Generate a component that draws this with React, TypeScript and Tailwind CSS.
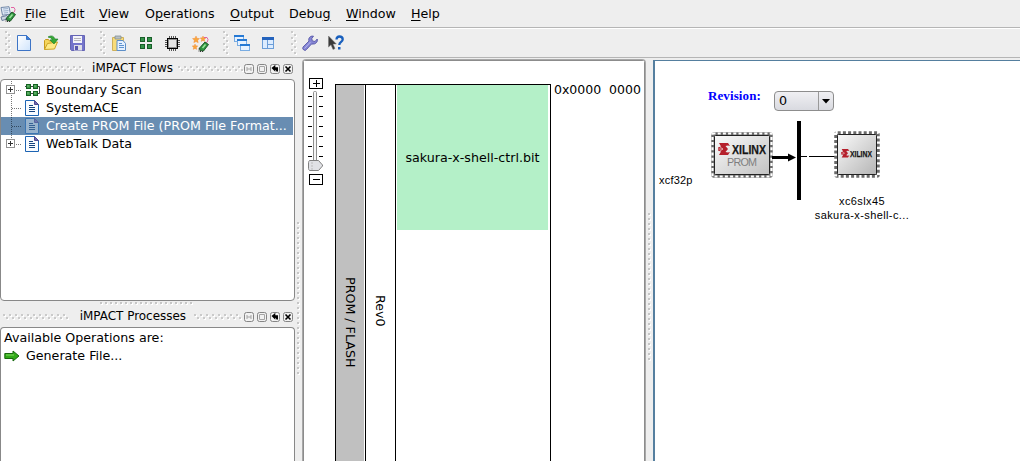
import React from "react";

function Grip({ dir, w, h }: { dir: "h" | "v"; w: number; h: number }) {
  const n = Math.floor((dir === "h" ? w : h) / 3);
  return (
    <svg width={w} height={h} className="shrink-0" shapeRendering="crispEdges">
      {Array.from({ length: n }, (_, i) => {
        const x = dir === "h" ? i * 3 : (i % 2) * 3;
        const y = dir === "h" ? (i % 2) * 3 : i * 3;
        return (
          <g key={i}>
            <rect x={x + 1} y={y + 1} width="2" height="2" fill="#fff" />
            <rect x={x} y={y} width="2" height="2" fill="#cacaca" />
          </g>
        );
      })}
    </svg>
  );
}

function LineGrip({ dir, n }: { dir: "h" | "v"; n: number }) {
  return (
    <svg width={dir === "h" ? n * 5 : 3} height={dir === "h" ? 3 : n * 5} className="shrink-0" shapeRendering="crispEdges">
      {Array.from({ length: n }, (_, i) => {
        const x = dir === "h" ? i * 5 : 0;
        const y = dir === "h" ? 0 : i * 5;
        return (
          <g key={i}>
            <rect x={x + 1} y={y + 1} width="2" height="2" fill="#fff" />
            <rect x={x} y={y} width="2" height="2" fill="#c6c6c6" />
          </g>
        );
      })}
    </svg>
  );
}

function DeviceTag() {
  return (
    <g>
      <path d="M11 1.500q4-1 4 2t-2.500 3.500" fill="none" stroke="#e0559a" strokeWidth=".9" />
      <path d="M6.500 12 12 6l3.500 2.500-5 6.500-3.500-.5z" fill="#2f9440" stroke="#174e20" strokeWidth=".9" />
      <path d="m9.500 12 3-3.500" stroke="#9ce59c" strokeWidth="1.500" />
      <path d="M6 12.500v3M7 15.500h3" stroke="#333" strokeDasharray="1 1" />
    </g>
  );
}

function AppIcon() {
  return (
    <svg width="16" height="16" viewBox="0 0 16 16">
      <path d="M1 1.500 9 .7l1.500 7.500-8 1z" fill="#dfe8f5" stroke="#7288a8" />
      <path d="m3 3 5-.5M3.400 5l5-.5M4 7l4-.5" stroke="#9db3cf" />
      <path d="m1 11 6-1.500 2 3-7 2z" fill="#cbd5e3" stroke="#6d809c" />
      <DeviceTag />
    </svg>
  );
}

function NewIcon() {
  return (
    <svg width="16" height="18" viewBox="0 0 16 18">
      <defs>
        <linearGradient id="paper" x1="0" y1="0" x2="1" y2="1">
          <stop offset="0" stopColor="#fff" />
          <stop offset="1" stopColor="#cfe4fc" />
        </linearGradient>
      </defs>
      <path d="M1.500 1.500h9l4 4v11h-13z" fill="url(#paper)" stroke="#3d74c6" />
      <path d="M10.500 1.500v4h4z" fill="#3b80dc" stroke="#3d74c6" />
    </svg>
  );
}

function OpenIcon() {
  return (
    <svg width="16" height="18" viewBox="0 0 16 18">
      <path d="M1.500 15.500V6.500l1-1h3l1 1.500h5v3" fill="#f5d65d" stroke="#c89a1c" />
      <path d="m1.500 15.500 3-6 10-1.500-3 7z" fill="#fdea86" stroke="#cda425" />
      <path d="M5 3q5-3 7 2h3l-4 5-4-4 2.500-.5Q8.500 3.500 5 3z" fill="#36a835" stroke="#167b24" strokeWidth=".6" />
    </svg>
  );
}

function SaveIcon() {
  return (
    <svg width="16" height="18" viewBox="0 0 16 18">
      <path d="M.5 1.500h14v15h-13l-1-1z" fill="#7474cb" stroke="#6565b4" />
      <path d="M3 2h9v7H3z" fill="#f4f4fa" />
      <path d="M4 4.500h7M4 6.500h7" stroke="#b5b5ba" />
      <path d="M4 11h8v5.500H4z" fill="#dedee6" />
      <path d="M5 12h3v4H5z" fill="#5959af" />
    </svg>
  );
}

function PasteIcon() {
  return (
    <svg width="16" height="17" viewBox="0 0 16 17">
      <path d="M1.500 2.500h11v13h-11z" fill="#f8dc79" stroke="#ceb05a" />
      <path d="M4 1h6v3H4z" fill="#b9c0c4" stroke="#829196" strokeWidth=".8" />
      <path d="M6 5.500h6l2.500 3v7H6z" fill="#e4f0ff" stroke="#5d8fc8" />
      <path d="M8 8.500h3M8 10.500h5M8 12.500h5" stroke="#5f93cf" />
    </svg>
  );
}

function BoundaryIcon() {
  return (
    <svg width="14" height="16" viewBox="0 0 14 16" shapeRendering="crispEdges">
      {[[1, 2], [8, 2], [1, 9], [8, 9]].map(([x, y]) => (
        <g key={`${x}-${y}`}>
          <rect x={x} y={y} width="5" height="5" fill="#185f29" />
          <rect x={x + 1} y={y + 1} width="3" height="3" fill="#35944b" />
        </g>
      ))}
    </svg>
  );
}

function ChipIcon() {
  return (
    <svg width="15" height="15" viewBox="0 0 15 15" shapeRendering="crispEdges">
      <path d="M4.500 0v15M6.500 0v15M8.500 0v15M10.500 0v15M0 4.500h15M0 6.500h15M0 8.500h15M0 10.500h15" stroke="#555" />
      <rect x="2" y="2" width="11" height="11" fill="#000" />
      <rect x="3" y="3" width="9" height="9" fill="#8f8f8f" />
      <rect x="4" y="4" width="7" height="7" fill="#e4e4e4" />
    </svg>
  );
}

function WizardIcon() {
  return (
    <svg width="17" height="17" viewBox="0 0 17 17">
      <g fill="#f9a63d" stroke="#ef8732" strokeWidth=".4">
        <path d="m4 1 1 2.300 2.500.3-1.800 1.700.5 2.400L4 6.500 1.800 7.700l.5-2.400L.5 3.600 3 3.300z" />
        <path d="m11 1 .8 1.800 2 .2-1.500 1.400.4 2L11 5.400 9.200 6.400l.5-2L8.200 3l2-.2z" />
        <path d="m3 9 .8 1.800 2 .2-1.500 1.400.4 2L3 13.400 1.200 14.400l.5-2L.2 11l2-.2z" />
      </g>
      <g transform="translate(1 1)"><DeviceTag /></g>
    </svg>
  );
}

function CascadeIcon() {
  return (
    <svg width="16" height="16" viewBox="0 0 16 16" shapeRendering="crispEdges">
      {[[0, 0], [3, 4], [6, 9]].map(([x, y]) => (
        <g key={x}>
          <rect x={x + 0.5} y={y + 0.5} width="9" height="6" fill="#e7f2ff" stroke="#79ace2" />
          <rect x={x} y={y} width="10" height="2" fill="#2679d4" />
        </g>
      ))}
    </svg>
  );
}

function TileIcon() {
  return (
    <svg width="12" height="12" viewBox="0 0 12 12" shapeRendering="crispEdges">
      <rect x=".5" y=".5" width="11" height="11" fill="#dcecff" stroke="#6c9ed8" />
      <path d="M0 0h12v3H0z" fill="#2463bd" />
      <path d="M5.500 3v9M6 7.500h6" stroke="#6c9ed8" />
    </svg>
  );
}

function WrenchIcon() {
  return (
    <svg width="16" height="16" viewBox="0 0 16 16">
      <path d="M11.500 1.200C8 .5 6 3.500 7 6L1 12q-1 2 .8 3t2.700-.5l5-5.500q4 .8 5.600-2.200.6-1.500.1-2.800L13 6.500l-2.700-.6L9.800 3.500z" fill="#8585d4" stroke="#5858a8" strokeWidth=".9" />
      <path d="m2.500 13.500 6-6.500" stroke="#b6b6ee" />
    </svg>
  );
}

function WhatsThisIcon() {
  return (
    <svg width="16" height="16" viewBox="0 0 16 16">
      <path d="M.5 1v11L3 9.800l2 4.700 2-.9-2-4.600H8.300z" fill="#3a3a3a" stroke="#777" strokeWidth=".5" />
      <path d="M8.500 4.500Q8.500 1.500 11.500 1.500t3.200 2.700Q14.700 6 13 7t-1.700 3" fill="none" stroke="#185fbd" strokeWidth="2.300" />
      <path d="M10 12h2.500v2.500H10z" fill="#185fbd" />
    </svg>
  );
}

const menus = [
  { pre: "", key: "F", post: "ile", cls: "ml-[9px] w-[35px]" },
  { pre: "", key: "E", post: "dit", cls: "w-[39px]" },
  { pre: "", key: "V", post: "iew", cls: "w-[46px]" },
  { pre: "O", key: "p", post: "erations", cls: "w-[85px]" },
  { pre: "", key: "O", post: "utput", cls: "w-[59px]" },
  { pre: "Debu", key: "g", post: "", cls: "w-[57px]" },
  { pre: "", key: "W", post: "indow", cls: "w-[65px]" },
  { pre: "", key: "H", post: "elp", cls: "w-[40px]" },
];

function MenuBar() {
  return (
    <nav className="flex h-7 shrink-0 items-center border-b border-[#b5b5b5] text-[12.67px]">
      <AppIcon />
      {menus.map((m) => (
        <span key={m.key + m.post} className={`${m.cls} shrink-0 whitespace-nowrap`}>
          {m.pre}
          <span className="underline underline-offset-2">{m.key}</span>
          {m.post}
        </span>
      ))}
    </nav>
  );
}

function ToolBar() {
  return (
    <div className="flex h-[30px] shrink-0 items-center border-t border-b border-t-white border-b-[#b5b5b5] pl-[5px]">
      <Grip dir="v" w={7} h={24} />
      <div className="ml-[4px] flex gap-[11px]"><NewIcon /><OpenIcon /><SaveIcon /></div>
      <div className="ml-[14px] flex"><Grip dir="v" w={7} h={24} /></div>
      <div className="ml-[4px] flex items-center gap-[12px]"><PasteIcon /><BoundaryIcon /><ChipIcon /><WizardIcon /></div>
      <div className="ml-[14px] flex"><Grip dir="v" w={7} h={24} /></div>
      <div className="ml-[4px] flex items-center gap-[12px]"><CascadeIcon /><TileIcon /></div>
      <div className="ml-[17px] flex"><Grip dir="v" w={7} h={24} /></div>
      <div className="ml-[4px] flex items-center gap-[10px]"><WrenchIcon /><WhatsThisIcon /></div>
    </div>
  );
}

function DockButtons() {
  return (
    <div className="flex gap-[3px]">
      {["M3 3v4M7 3v4M3 5h4", "M2.500 2.500h5v5h-5z", "M3 4h4.200v3.500M4.500 2.500 2.700 4l1.800 1.800z", "m2.500 2.500 5 5M7.500 2.500l-5 5"].map((d, i) => (
        <svg key={d} width="10" height="10" viewBox="0 0 10 10">
          <rect x=".5" y=".5" width="9" height="9" rx="2" fill="#f1f1f1" stroke="#858585" />
          <path d={d} fill={i === 2 ? "#000" : "none"} stroke={i > 1 ? "#000" : "#a5a5a5"} strokeWidth={i > 1 ? 1.6 : 1} />
        </svg>
      ))}
    </div>
  );
}

function DockTitle({ title, pad, left, right, gap }: { title: string; pad: string; left: number; right: number; gap: string }) {
  return (
    <div className={`flex h-[21px] shrink-0 items-center pr-[2px] ${pad}`}>
      <Grip dir="h" w={left} h={6} />
      <span className={`ml-auto whitespace-nowrap pb-px text-[11.95px] ${gap}`}>{title}</span>
      <Grip dir="h" w={right} h={6} />
      <DockButtons />
    </div>
  );
}

function DocIcon({ dim }: { dim?: boolean }) {
  return (
    <svg width="14" height="16" viewBox="0 0 14 16" className="shrink-0" opacity={dim ? 0.6 : 1}>
      <path d="M.5.5h9l4 4v11H.5z" fill={dim ? "#b9cde0" : "#f8fbff"} stroke="#1d64b3" />
      <path d="M9.500.5v4h4z" fill="#7066b0" stroke="#4d4b91" />
      <path d="M4 5.500h4M4 7.500h6M4 9.500h6M4 11.500h6" stroke="#16457f" />
    </svg>
  );
}

function ChainIcon() {
  return (
    <svg width="15" height="14" viewBox="0 0 15 14">
      <path d="M0 3.500h14.500v7H2" fill="none" stroke="#444" />
      {[[2, 1], [9, 1], [2, 8], [9, 8]].map(([x, y]) => (
        <g key={`${x}-${y}`}>
          <rect x={x - 0.5} y={y + 0.5} width="4" height="4" fill="#3d9a48" stroke="#146221" />
          <rect x={x + 0.5} y={y + 1.5} width="1" height="1" fill="#b6e0b8" />
        </g>
      ))}
    </svg>
  );
}

function Branch({ last, box, dim }: { last?: boolean; box?: boolean; dim?: boolean }) {
  return (
    <svg width="24" height="18" viewBox="0 0 24 18" className="shrink-0" shapeRendering="crispEdges">
      <path d={`M10.500 0V${last ? 9 : 18}M11 9.500h9`} stroke={dim ? "#344a60" : "#777"} strokeDasharray="1 1" />
      {box && (
        <g>
          <rect x="5.500" y="4.500" width="8" height="8" fill="#fff" stroke="#929292" />
          <path d="M7 8.500h5M9.500 6v5" stroke="#333" />
        </g>
      )}
    </svg>
  );
}

function FlowTree() {
  return (
    <div className="h-[222px] w-[295px] shrink-0 rounded-sm border border-[#888] bg-white pt-px pr-px text-[12.67px]">
      <div className="flex h-[18px] items-center"><Branch box /><ChainIcon /><span className="ml-[6px]">Boundary Scan</span></div>
      <div className="flex h-[18px] items-center"><Branch /><DocIcon /><span className="ml-[7px]">SystemACE</span></div>
      <div className="flex h-[18px] items-center bg-[#688db2] text-white"><Branch dim /><DocIcon dim /><span className="ml-[7px] whitespace-nowrap">Create PROM File (PROM File Format...</span></div>
      <div className="flex h-[18px] items-center"><Branch last box /><DocIcon /><span className="ml-[7px]">WebTalk Data</span></div>
    </div>
  );
}

function LeftDock() {
  return (
    <aside className="flex w-[295px] shrink-0 flex-col">
      <DockTitle title="iMPACT Flows" pad="pl-[1px]" left={84} right={66} gap="mr-[5px]" />
      <FlowTree />
      <div className="flex h-[5px] shrink-0 items-center justify-center"><LineGrip dir="h" n={19} /></div>
      <DockTitle title="iMPACT Processes" pad="pl-[3px]" left={66} right={50} gap="mr-[8px]" />
      <div className="h-[140px] rounded-t-sm border border-b-0 border-[#888] bg-white pl-[3px] pt-[1px] text-[12.67px]">
        <div className="flex h-[18px] items-center">Available Operations are:</div>
        <div className="flex h-[18px] items-center">
          <svg width="16" height="12" viewBox="0 0 16 12">
            <path d="M.8 3.500H9V1l6 5-6 5V8.500H.8z" fill="#32aa19" stroke="#17690e" />
            <path d="M2 5h8" stroke="#83dc63" />
          </svg>
          <span className="ml-[6px]">Generate File...</span>
        </div>
      </div>
    </aside>
  );
}

function ZoomSlider() {
  return (
    <div className="flex w-4 flex-col items-center">
      <svg width="16" height="108" viewBox="0 0 16 108">
        <rect x="1.500" y=".5" width="13" height="10" fill="#fff" stroke="#000" />
        <path d="M5 5.500h7M8.500 2v7" stroke="#000" />
        <rect x="5.500" y="13.500" width="3" height="74" rx="1" fill="#f5f5f5" stroke="#8d8d8d" />
        {[18.5, 28.5, 38.5, 48.5, 58.5, 68.5, 78.5].map((y) => (
          <path key={y} d={`M0 ${y}h4M11 ${y}h4`} stroke="#000" />
        ))}
        <path d="M1.500 82.500h9l4 4.500v1l-4 4.500h-9q-1-1-1-2v-6q0-1 1-2z" fill="#e1e2e6" stroke="#818181" />
        <path d="M3 85h2M3 88h2M3 91h2" stroke="#bbb" />
        <rect x="1.500" y="96.500" width="13" height="10" fill="#fff" stroke="#000" />
        <path d="M5 101.500h7" stroke="#000" />
      </svg>
    </div>
  );
}

function MemoryMap() {
  return (
    <section className="mt-[1px] flex w-[344px] shrink-0 overflow-hidden rounded-t-sm border border-b-0 border-[#a8a8a8] bg-white">
      <div className="flex flex-1 overflow-hidden border border-b-0 border-[#8c8c8c] pl-[4px] pt-[17px]">
        <ZoomSlider />
        <div className="ml-[11px] mt-[6px] flex w-[216px] shrink-0 border border-b-0 border-black text-[12.67px]">
          <div className="flex w-[28px] justify-center bg-[#c0c0c0] pt-[192px]">
            <span className="whitespace-nowrap [writing-mode:vertical-rl]">PROM / FLASH</span>
          </div>
          <div className="ml-px flex w-[31px] justify-center border-x border-black pr-[2px] pt-[210px]">
            <span className="[writing-mode:vertical-rl]">Rev0</span>
          </div>
          <div className="ml-px flex h-[145px] w-[151px] items-center justify-center whitespace-nowrap bg-[#b4f0c8]">sakura-x-shell-ctrl.bit</div>
        </div>
        <span className="ml-[3px] mt-[4px] shrink-0 whitespace-pre text-[12.5px]">0x0000  0000</span>
      </div>
    </section>
  );
}

function XilinxMark({ x, y, scale, size, tx, tw, ty }: { x: number; y: number; scale: number; size: number; tx: number; tw: number; ty: number }) {
  return (
    <g>
      <path transform={`translate(${x} ${y}) scale(${scale})`} d="M1 0h9l2 3-2-.5-2.500.5L10 6 7.500 9l2.500.5 2-.5-2 3H1l2-3.500L0 7.500v-3l3-1z" fill="#b51f2b" />
      <path transform={`translate(${x} ${y}) scale(${scale})`} d="M0 6h5M2 4l3 2-3 2" fill="none" stroke="#e6c4c4" strokeWidth=".7" />
      <text x={tx} y={ty} textLength={tw} lengthAdjust="spacingAndGlyphs" fontFamily="Liberation Sans" fontSize={size} fontWeight="700" fill="#151515" stroke="#151515" strokeWidth=".25">XILINX</text>
    </g>
  );
}

function Chip({ w, h, prom }: { w: number; h: number; prom?: boolean }) {
  return (
    <svg width={w} height={h} className="block">
      <defs>
        <linearGradient id={prom ? "promFill" : "fpgaFill"} x1="0" y1="0" x2="1" y2="1">
          <stop offset="0" stopColor="#fafafa" />
          <stop offset="1" stopColor={prom ? "#c2c2c2" : "#b5b5b5"} />
        </linearGradient>
      </defs>
      <rect x="2" y="2" width={w - 4} height={h - 4} rx="1" fill="#fff" stroke="#6a6a6a" strokeWidth="3.500" />
      <rect x="1.500" y="1.500" width={w - 3} height={h - 3} fill="none" stroke="#fff" strokeWidth={prom ? 2.2 : 3} strokeDasharray={prom ? "3 2.2" : "2.2 3"} />
      <rect x="3.500" y="3.500" width={w - 7} height={h - 7} rx="1" fill={`url(#${prom ? "promFill" : "fpgaFill"})`} stroke="#222" />
      {prom ? (
        <XilinxMark x={7} y={11} scale={1} size={13} tx={21} tw={34} ty={22} />
      ) : (
        <XilinxMark x={7} y={18} scale={0.7} size={9.5} tx={16} tw={22} ty={25.5} />
      )}
      {prom && <text x="16" y="34" textLength="30" fontFamily="Liberation Sans" fontSize="10.800" fill="#7f7f7f">PROM</text>}
    </svg>
  );
}

function DeviceDiagram() {
  return (
    <main className="relative mt-[2px] min-w-0 flex-1 overflow-hidden border-l-2 border-t border-[#557f9f] bg-white">
      <span className="absolute left-[53px] top-[27px] font-['Liberation_Serif'] text-[13px] font-bold tracking-[0.1px] text-[#0000ff]">Revision:</span>
      <div className="absolute left-[119px] top-[30px] flex h-5 w-[60px] items-center rounded-sm border border-[#8d8d8d] bg-linear-to-b from-[#f0f0f3] to-[#d9dae0] text-[12.67px]">
        <span className="w-[43px] pl-1">0</span>
        <span className="flex h-full flex-1 items-center justify-center border-l border-[#999]">
          <svg width="8" height="5" viewBox="0 0 8 5"><path d="M0 0h8L4 4.500z" /></svg>
        </span>
      </div>
      <div className="absolute left-[56px] top-[71px]"><Chip w={62} h={46} prom /></div>
      <svg className="absolute left-[117px] top-[60px]" width="64" height="80">
        <path d="M0 36.500h17" stroke="#000" strokeWidth="3" />
        <path d="M16 32.500v8l8-4z" />
        <path d="M25 0h4v79h-4z" />
        <path d="M29 35.500h6M37 35.500h27" stroke="#000" />
      </svg>
      <div className="absolute left-[179px] top-[70px]"><Chip w={46} h={47} /></div>
      <span className="absolute left-[4px] top-[111px] font-['Liberation_Sans'] text-[11px] tracking-[0.2px]">xcf32p</span>
      <div className="absolute left-[147px] top-[133px] w-[120px] text-center font-['Liberation_Sans'] text-[11px] leading-[14px] tracking-[0.4px]">
        xc6slx45<br />sakura-x-shell-c...
      </div>
    </main>
  );
}

export default function App() {
  return (
    <div className="flex h-[461px] w-[1020px] flex-col overflow-hidden bg-[#eeeeee] font-['DejaVu_Sans',sans-serif] leading-4 text-black">
      <MenuBar />
      <ToolBar />
      <div className="flex min-h-0 flex-1">
        <LeftDock />
        <div className="flex w-[7px] shrink-0 justify-center pt-[164px]"><LineGrip dir="v" n={31} /></div>
        <MemoryMap />
        <div className="flex w-[7px] shrink-0 justify-center pt-[155px]"><LineGrip dir="v" n={30} /></div>
        <DeviceDiagram />
      </div>
    </div>
  );
}
